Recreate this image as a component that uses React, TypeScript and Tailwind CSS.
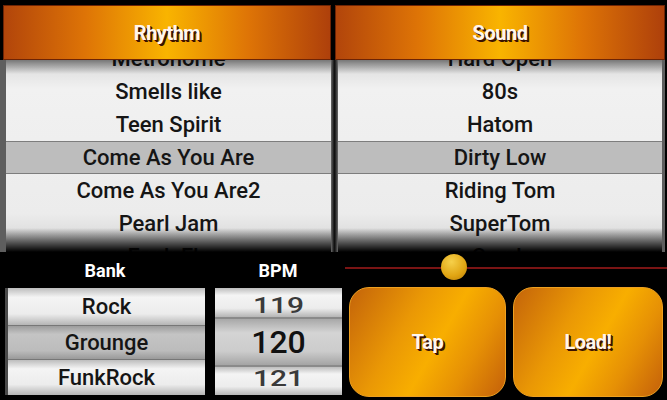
import React from 'react';

const rhythms = ['Metronome', 'Smells like', 'Teen Spirit', 'Come As You Are', 'Come As You Are2', 'Pearl Jam', 'Funk Fly'];
const sounds = ['Hard Open', '80s', 'Hatom', 'Dirty Low', 'Riding Tom', 'SuperTom', 'Crash'];

const Header: React.FC<{ title: string }> = ({ title }) => (
  <div className="h-[55px] flex items-center justify-center border border-[#6e2405] bg-[linear-gradient(90deg,#b2450b,#de7406_25%,#f9b400_50%,#de7406_75%,#ae400b)]">
    <span className="text-[20px] font-bold text-[#fff6ee] tracking-[-0.5px] [text-shadow:1px_1px_0_#3b1200,2px_2px_0_#3b1200]">
      {title}
    </span>
  </div>
);

const Wheel: React.FC<{ items: string[]; selected: number }> = ({ items, selected }) => (
  <div className="relative flex-1 min-h-0 overflow-hidden bg-[linear-gradient(#d9d9d9,#f1f1f1_15%,#ececec_80%,#d0d0d0)]">
    <div className="-mt-[18px] flex flex-col">
      {items.map((item, i) => (
        <div
          key={item}
          className={
            i === selected
              ? 'h-[33px] shrink-0 flex items-center justify-center text-[22px] font-medium text-[#151515] bg-[#bdbdbd] border-y border-[#7d7d7d]'
              : 'h-[33px] shrink-0 flex items-center justify-center text-[22px] font-medium text-[#151515]'
          }
        >
          {item}
        </div>
      ))}
    </div>
    <div className="absolute inset-x-0 top-0 h-[14px] bg-[linear-gradient(rgba(0,0,0,0.45),transparent)]" />
    <div className="absolute inset-x-0 bottom-0 h-[24px] bg-[linear-gradient(transparent,#000)]" />
  </div>
);

const OrangeButton: React.FC<{ label: string; className: string }> = ({ label, className }) => (
  <div
    className={`${className} h-[110px] rounded-[20px] border border-[#eea020] flex items-center justify-center bg-[linear-gradient(120deg,#c4640a,#ea9805_35%,#f8ae00_55%,#e69005_75%,#c4600a)]`}
  >
    <span className="text-[20px] font-bold text-[#fff6ee] tracking-[-0.5px] [text-shadow:1px_1px_0_#3b1200,2px_2px_0_#3b1200]">
      {label}
    </span>
  </div>
);

const rowLight = 'bg-[linear-gradient(#bdbdbd,#f4f4f4_25%,#ececec_70%,#b5b5b5)]';

export default function App() {
  return (
    <div className="w-[667px] h-[400px] bg-black overflow-hidden font-[Roboto,sans-serif] select-none">
      {/* pickers */}
      <div className="flex h-[252px] pt-[5px] overflow-hidden">
        <div className="w-[331px] flex flex-col min-h-0">
          <div className="ml-[3px]">
            <Header title="Rhythm" />
          </div>
          <div className="flex flex-1 min-h-0 border-l-[6px] border-[#5e5e5e]">
            <Wheel items={rhythms} selected={3} />
          </div>
        </div>
        <div className="w-[7px] flex flex-col min-h-0">
          <div className="h-[55px]" />
          <div className="flex-1 bg-[linear-gradient(90deg,#6a6a6a,#111_45%,#111_55%,#6a6a6a)]" />
        </div>
        <div className="w-[327px] flex flex-col min-h-0">
          <div className="-ml-[3px]">
            <Header title="Sound" />
          </div>
          <div className="flex flex-1 min-h-0 border-r-[3px] border-[#5e5e5e]">
            <Wheel items={sounds} selected={3} />
          </div>
        </div>
      </div>

      {/* bottom controls */}
      <div className="flex h-[148px]">
        <div className="w-[345px] flex flex-col">
          <div className="h-[36px] flex items-center text-white text-[18px] font-bold">
            <div className="w-[200px] ml-[5px] text-center">Bank</div>
            <div className="w-[126px] ml-[10px] text-center">BPM</div>
          </div>
          <div className="flex">
            <div className="w-[200px] ml-[5px] h-[107px] flex flex-col overflow-hidden border-l-[3px] border-[#4a4a4a]">
              <div className={`h-[37px] flex items-center justify-center text-[22px] font-medium text-[#151515] ${rowLight}`}>Rock</div>
              <div className="h-[35px] flex items-center justify-center text-[22px] font-medium text-[#151515] bg-[linear-gradient(#9c9c9c,#c4c4c4_25%,#bcbcbc_75%,#9a9a9a)] border-y border-[#777]">Grounge</div>
              <div className={`h-[35px] flex items-center justify-center text-[22px] font-medium text-[#151515] ${rowLight}`}>FunkRock</div>
            </div>
            <div className="w-[127px] ml-[10px] h-[107px] flex flex-col overflow-hidden">
              <div className={`h-[29px] flex items-end justify-center overflow-hidden ${rowLight}`}>
                <span className="text-[30px] leading-[30px] font-medium text-[#3a3a3a] scale-y-[0.75] origin-bottom">119</span>
              </div>
              <div className="h-[50px] flex items-center justify-center text-[32px] font-medium text-[#111] bg-[linear-gradient(#a8a8a8,#d4d4d4_30%,#cccccc_70%,#a4a4a4)] border-y-2 border-[#8a8a8a]">
                120
              </div>
              <div className={`h-[28px] flex items-start justify-center overflow-hidden ${rowLight}`}>
                <span className="text-[30px] leading-[30px] font-medium text-[#3a3a3a] scale-y-[0.75] origin-top">121</span>
              </div>
            </div>
          </div>
        </div>
        <div className="flex-1 flex flex-col">
          <div className="relative h-[35px]">
            <div className="mt-[15px] h-[2px] bg-[#7a1414]" />
            <div className="absolute left-[96px] top-[2px] w-[26px] h-[26px] rounded-full bg-[radial-gradient(circle_at_40%_30%,#f6d04a,#e0a412_60%,#b57a0a)]" />
          </div>
          <div className="flex gap-[7px] pl-[4px]">
            <OrangeButton label="Tap" className="w-[157px]" />
            <OrangeButton label="Load!" className="w-[150px]" />
          </div>
        </div>
      </div>
    </div>
  );
}
